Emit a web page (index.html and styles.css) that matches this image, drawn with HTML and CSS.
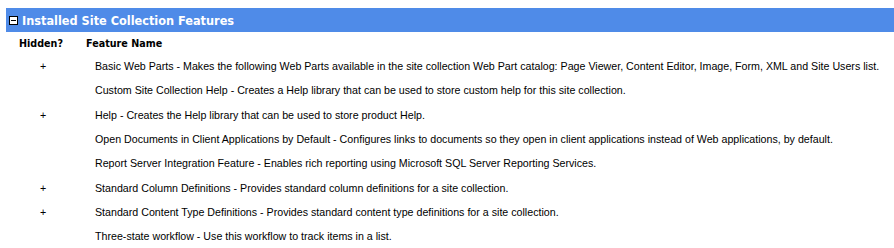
FILE: index.html
```html
<!DOCTYPE html>
<html lang="en">

<head>
    <meta charset="UTF-8">
    <title>Site Collection Features</title>
    <link rel="stylesheet" href="styles.css">
</head>

<body>
    <div class="section">
        <div class="section-title">
            <span class="toggle"></span>
            Installed Site Collection Features
        </div>

        <table class="features">
            <colgroup>
                <col class="col-hidden">
                <col>
            </colgroup>
            <thead>
                <tr>
                    <th class="hidden-cell">Hidden?</th>
                    <th>Feature Name</th>
                </tr>
            </thead>
            <tbody>
                <tr>
                    <td class="hidden-cell">+</td>
                    <td>Basic Web Parts - Makes the following Web Parts available in the site collection Web Part catalog: Page Viewer, Content Editor, Image, Form, XML and Site Users list.</td>
                </tr>
                <tr>
                    <td class="hidden-cell"></td>
                    <td>Custom Site Collection Help - Creates a Help library that can be used to store custom help for this site collection.</td>
                </tr>
                <tr>
                    <td class="hidden-cell">+</td>
                    <td>Help - Creates the Help library that can be used to store product Help.</td>
                </tr>
                <tr>
                    <td class="hidden-cell"></td>
                    <td>Open Documents in Client Applications by Default - Configures links to documents so they open in client applications instead of Web applications, by default.</td>
                </tr>
                <tr>
                    <td class="hidden-cell"></td>
                    <td>Report Server Integration Feature - Enables rich reporting using Microsoft SQL Server Reporting Services.</td>
                </tr>
                <tr>
                    <td class="hidden-cell">+</td>
                    <td>Standard Column Definitions - Provides standard column definitions for a site collection.</td>
                </tr>
                <tr>
                    <td class="hidden-cell">+</td>
                    <td>Standard Content Type Definitions - Provides standard content type definitions for a site collection.</td>
                </tr>
                <tr>
                    <td class="hidden-cell"></td>
                    <td>Three-state workflow - Use this workflow to track items in a list.</td>
                </tr>
            </tbody>
        </table>
    </div>
</body>

</html>
```

FILE: styles.css
```css
body {
    margin: 8px 0 0 6px;
    font-family: 'Liberation Sans', Arial, sans-serif;
    background-color: #fff;
    color: #000;
}

.section-title {
    display: flex;
    align-items: center;
    height: 24px;
    background-color: #4f8be8;
    color: #fff;
    font-family: 'DejaVu Sans Condensed', 'DejaVu Sans', sans-serif;
    font-stretch: condensed;
    font-weight: bold;
    font-size: 12.6px;
}

.toggle {
    width: 7px;
    height: 7px;
    margin: 0 4px 0 3px;
    border: 1px solid #000;
    background-color: #fff;
    position: relative;
}

/* the minus bar inside the box */
.toggle::after {
    content: "";
    position: absolute;
    left: 1px;
    right: 1px;
    top: 3px;
    height: 1px;
    background-color: #000;
}

.features {
    border-collapse: collapse;
    table-layout: fixed;
    width: 880px;
    font-size: 10.67px;
}

.features col.col-hidden {
    width: 80px;
}

.features th {
    text-align: left;
    font-family: 'DejaVu Sans', Tahoma, sans-serif;
    font-size: 9.6px;
    font-weight: bold;
    height: 22px;
    padding: 0;
}

.features th.hidden-cell {
    padding-left: 13px;
}

.features td {
    height: 24.33px;
    padding: 0 0 0 9px;
    white-space: nowrap;
}

.features td.hidden-cell {
    padding-left: 34px;
}
```
